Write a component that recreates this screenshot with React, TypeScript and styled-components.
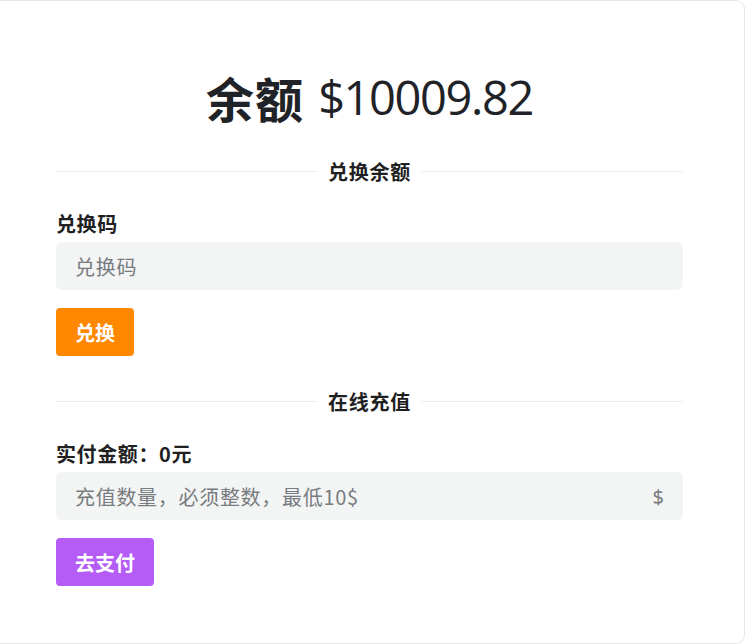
import React from "react";
import styled, { createGlobalStyle } from "styled-components";

const Global = createGlobalStyle`
  html, body { margin: 0; padding: 0; background: #ffffff; }
  body { font-family: "Noto Sans", "Noto Sans CJK SC", sans-serif; color: #1f1f1f; }
  * { box-sizing: border-box; }
`;

const Card = styled.div`
  width: 745px;
  height: 644px;
  background: #ffffff;
  border: 1px solid #e6e6e6;
  border-left: none;
  border-radius: 0 9px 9px 0;
  padding: 0 61px 0 56px;
  display: flex;
  flex-direction: column;
`;

const Title = styled.h1`
  margin: 65px 0 0;
  height: 62px;
  display: flex;
  align-items: center;
  justify-content: center;
  gap: 14px;
  font-weight: 400;
  color: #1f2328;
`;

const TitleLabel = styled.span`
  font-family: "Noto Sans CJK SC", sans-serif;
  font-size: 48px;
  font-weight: 700;
  letter-spacing: 1px;
`;

const TitleAmount = styled.span`
  font-family: "Open Sans", "Noto Sans", sans-serif;
  font-size: 47px;
  letter-spacing: -1.4px;
  font-weight: 400;
`;

const Divider = styled.div<{ $top: number }>`
  margin-top: ${(p) => p.$top}px;
  display: flex;
  align-items: center;
  gap: 11px;
  height: 24px;
  &::before, &::after {
    content: "";
    flex: 1;
    height: 1px;
    background: #ececec;
  }
`;

const DividerText = styled.span`
  font-family: "Noto Sans CJK SC", sans-serif;
  font-size: 20px;
  font-weight: 700;
  letter-spacing: 0.8px;
  color: #1f1f1f;
`;

const Label = styled.div<{ $top: number }>`
  margin-top: ${(p) => p.$top}px;
  height: 28px;
  line-height: 28px;
  font-family: "Noto Sans CJK SC", sans-serif;
  font-size: 20px;
  font-weight: 700;
  letter-spacing: 0.6px;
  color: #1f1f1f;
`;

const Field = styled.div`
  margin-top: 4px;
  height: 48px;
  border-radius: 6px;
  background: #f3f4f4;
  display: flex;
  align-items: center;
  padding: 0 19px 0 19px;
`;

const Input = styled.input`
  flex: 1;
  min-width: 0;
  border: none;
  outline: none;
  background: transparent;
  padding: 0;
  font-family: "Noto Sans CJK SC", sans-serif;
  font-size: 20px;
  letter-spacing: 0.7px;
  color: #333;
  &::placeholder { color: #787c80; }
`;

const Suffix = styled.span`
  font-family: "Noto Sans", sans-serif;
  font-size: 20px;
  color: #787c80;
`;

const Button = styled.button<{ $bg: string }>`
  margin-top: 18px;
  align-self: flex-start;
  height: 48px;
  padding: 0 19px;
  border: none;
  border-radius: 4px;
  background: ${(p) => p.$bg};
  color: #ffffff;
  font-family: "Noto Sans CJK SC", sans-serif;
  font-size: 20px;
  font-weight: 700;
  cursor: pointer;
`;

export default function App() {
  return (
    <>
      <Global />
      <Card>
        <Title>
          <TitleLabel>余额</TitleLabel>
          <TitleAmount>$10009.82</TitleAmount>
        </Title>
        <Divider $top={31}>
          <DividerText>兑换余额</DividerText>
        </Divider>
        <Label $top={27}>兑换码</Label>
        <Field>
          <Input placeholder="兑换码" />
        </Field>
        <Button $bg="#ff8800">兑换</Button>
        <Divider $top={33}>
          <DividerText>在线充值</DividerText>
        </Divider>
        <Label $top={27}>实付金额：0元</Label>
        <Field>
          <Input placeholder="充值数量，必须整数，最低10$" />
          <Suffix>$</Suffix>
        </Field>
        <Button $bg="#b55cf7">去支付</Button>
      </Card>
    </>
  );
}
